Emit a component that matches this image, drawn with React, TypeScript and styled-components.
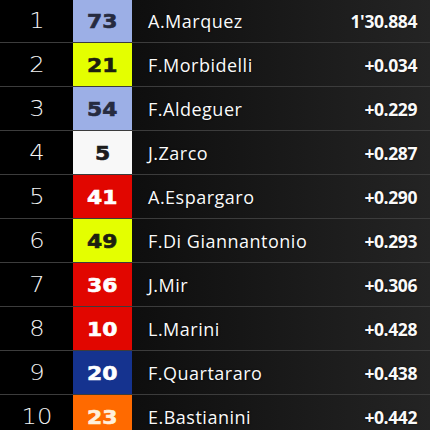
import styled, { createGlobalStyle } from "styled-components";

const GlobalStyle = createGlobalStyle`
  html, body {
    margin: 0;
    padding: 0;
    background: #000;
    overflow: hidden;
  }
`;

type Rider = {
  pos: number;
  num: string;
  name: string;
  time: string;
  bg: string;
  fg: string;
};

const riders: Rider[] = [
  { pos: 1, num: "73", name: "A.Marquez", time: "1'30.884", bg: "#9cafe6", fg: "#262b40" },
  { pos: 2, num: "21", name: "F.Morbidelli", time: "+0.034", bg: "#e4ff00", fg: "#1d1f10" },
  { pos: 3, num: "54", name: "F.Aldeguer", time: "+0.229", bg: "#9cafe6", fg: "#262b40" },
  { pos: 4, num: "5", name: "J.Zarco", time: "+0.287", bg: "#f8f8f8", fg: "#1c1c1c" },
  { pos: 5, num: "41", name: "A.Espargaro", time: "+0.290", bg: "#e10600", fg: "#ffffff" },
  { pos: 6, num: "49", name: "F.Di Giannantonio", time: "+0.293", bg: "#e4ff00", fg: "#1d1f10" },
  { pos: 7, num: "36", name: "J.Mir", time: "+0.306", bg: "#e10600", fg: "#ffffff" },
  { pos: 8, num: "10", name: "L.Marini", time: "+0.428", bg: "#e10600", fg: "#ffffff" },
  { pos: 9, num: "20", name: "F.Quartararo", time: "+0.438", bg: "#15338f", fg: "#ffffff" },
  { pos: 10, num: "23", name: "E.Bastianini", time: "+0.442", bg: "#ff6a00", fg: "#fff0dc" },
];

const Board = styled.div`
  margin-top: -1px;
  width: 430px;
  display: flex;
  flex-direction: column;
`;

const Row = styled.div`
  display: grid;
  grid-template-columns: 73px 59px 1fr auto;
  height: 43px;
  border-bottom: 1px solid #3c3c3c;
  background: linear-gradient(90deg, #000 0, #000 132px, #0e0e0e 132px, #242424 100%);
`;

const Pos = styled.div`
  display: flex;
  align-items: center;
  justify-content: center;
  color: #f4f4f4;
  font-family: "DejaVu Sans", sans-serif;
  font-weight: 200;
  font-size: 22px;

  span {
    display: inline-block;
    transform: scaleX(1.1);
  }
`;

const NumBox = styled.div<{ $bg: string; $fg: string }>`
  display: flex;
  align-items: center;
  justify-content: center;
  background: ${(p) => p.$bg};
  color: ${(p) => p.$fg};
  font-family: "DejaVu Sans", sans-serif;
  font-weight: 700;
  font-size: 19px;

  span {
    display: inline-block;
    transform: scaleX(1.15);
    -webkit-text-stroke: 0.6px currentColor;
  }
`;

const Name = styled.div`
  display: flex;
  align-items: center;
  padding-left: 16px;
  color: #fafafa;
  font-family: "Open Sans", sans-serif;
  font-weight: 500;
  font-size: 18px;
  letter-spacing: 0.5px;
  text-shadow: 0 0 2px rgba(0, 0, 0, 0.8);
`;

const Time = styled.div`
  display: flex;
  align-items: center;
  padding-right: 13px;
  color: #fafafa;
  font-family: "Open Sans", sans-serif;
  font-weight: 700;
  font-size: 17.5px;
  letter-spacing: -0.4px;
  text-shadow: 0 0 2px rgba(0, 0, 0, 0.8);
`;

export default function App() {
  return (
    <>
      <GlobalStyle />
      <Board>
        {riders.map((r) => (
          <Row key={r.pos}>
            <Pos>
              <span>{r.pos}</span>
            </Pos>
            <NumBox $bg={r.bg} $fg={r.fg}>
              <span>{r.num}</span>
            </NumBox>
            <Name>{r.name}</Name>
            <Time>{r.time}</Time>
          </Row>
        ))}
      </Board>
    </>
  );
}
